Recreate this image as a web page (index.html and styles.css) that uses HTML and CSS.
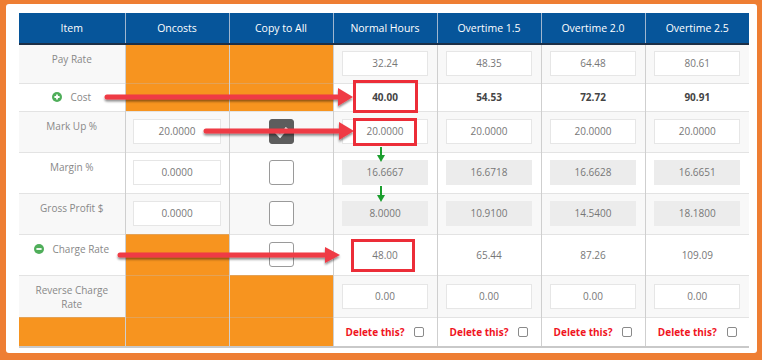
FILE: index.html
```html
<!DOCTYPE html>
<html>
<head>
<meta charset="utf-8">
<link rel="stylesheet" href="styles.css">
</head>
<body>
<div class="frame">
  <div class="sheet">
    <table class="grid">
      <colgroup>
        <col class="c-item"><col class="c-col"><col class="c-col"><col class="c-col"><col class="c-col"><col class="c-col"><col class="c-col">
      </colgroup>
      <thead>
        <tr>
          <th>Item</th><th>Oncosts</th><th>Copy to All</th><th>Normal Hours</th><th>Overtime 1.5</th><th>Overtime 2.0</th><th>Overtime 2.5</th>
        </tr>
      </thead>
      <tbody>
        <tr class="r-pay odd">
          <td class="label">Pay Rate</td>
          <td class="fill"></td><td class="fill"></td>
          <td><span class="field">32.24</span></td>
          <td><span class="field">48.35</span></td>
          <td><span class="field">64.48</span></td>
          <td><span class="field">80.61</span></td>
        </tr>
        <tr class="r-cost">
          <td class="label mid"><span class="toggle"><svg width="10" height="10" viewBox="0 0 10 10"><circle cx="5" cy="5" r="5" fill="#4fae5a"/><path d="M5 2.4v5.2M2.4 5h5.2" stroke="#fff" stroke-width="1.8"/></svg></span>Cost</td>
          <td class="fill"></td><td class="fill"></td>
          <td class="strong">40.00</td>
          <td class="strong">54.53</td>
          <td class="strong">72.72</td>
          <td class="strong">90.91</td>
        </tr>
        <tr class="r-std odd">
          <td class="label">Mark Up %</td>
          <td><span class="field wide">20.0000</span></td>
          <td><span class="box checked"><svg width="25" height="25" viewBox="0 0 25 25"><path d="M7 13l4 4 7-8" stroke="#fff" stroke-width="3" fill="none"/></svg></span></td>
          <td><span class="field">20.0000</span></td>
          <td><span class="field">20.0000</span></td>
          <td><span class="field">20.0000</span></td>
          <td><span class="field">20.0000</span></td>
        </tr>
        <tr class="r-std">
          <td class="label">Margin %</td>
          <td><span class="field wide">0.0000</span></td>
          <td><span class="box"></span></td>
          <td><span class="field ro">16.6667</span></td>
          <td><span class="field ro">16.6718</span></td>
          <td><span class="field ro">16.6628</span></td>
          <td><span class="field ro">16.6651</span></td>
        </tr>
        <tr class="r-std odd">
          <td class="label">Gross Profit $</td>
          <td><span class="field wide">0.0000</span></td>
          <td><span class="box"></span></td>
          <td><span class="field ro">8.0000</span></td>
          <td><span class="field ro">10.9100</span></td>
          <td><span class="field ro">14.5400</span></td>
          <td><span class="field ro">18.1800</span></td>
        </tr>
        <tr class="r-std">
          <td class="label"><span class="toggle"><svg width="10" height="10" viewBox="0 0 10 10"><circle cx="5" cy="5" r="5" fill="#4fae5a"/><path d="M2.4 5h5.2" stroke="#fff" stroke-width="1.8"/></svg></span>Charge Rate</td>
          <td class="fill"></td>
          <td><span class="box"></span></td>
          <td class="plain">48.00</td>
          <td class="plain">65.44</td>
          <td class="plain">87.26</td>
          <td class="plain">109.09</td>
        </tr>
        <tr class="r-rev odd">
          <td class="label">Reverse Charge Rate</td>
          <td class="fill"></td><td class="fill"></td>
          <td><span class="field">0.00</span></td>
          <td><span class="field">0.00</span></td>
          <td><span class="field">0.00</span></td>
          <td><span class="field">0.00</span></td>
        </tr>
        <tr class="r-del">
          <td class="fill"></td><td class="fill"></td><td class="fill"></td>
          <td><span class="del">Delete this?</span><span class="mini"></span></td>
          <td><span class="del">Delete this?</span><span class="mini"></span></td>
          <td><span class="del">Delete this?</span><span class="mini"></span></td>
          <td><span class="del">Delete this?</span><span class="mini"></span></td>
        </tr>
      </tbody>
    </table>
  </div>
  <svg class="notes" width="762" height="360" viewBox="0 0 762 360">
    <defs>
      <filter id="sh" x="-10%" y="-100%" width="120%" height="300%">
        <feDropShadow dx="0" dy="2" stdDeviation="1" flood-color="#000" flood-opacity="0.45"/>
      </filter>
    </defs>
    <g filter="url(#sh)" fill="#ef3b45" stroke="#ef3b45">
      <line x1="107" y1="97" x2="341" y2="97" stroke-width="5" stroke-linecap="round"/>
      <polygon points="338,88 353,97 338,106" stroke="none"/>
      <line x1="206" y1="131" x2="341" y2="131" stroke-width="5" stroke-linecap="round"/>
      <polygon points="339,122 354,131 339,140" stroke="none"/>
      <line x1="120" y1="255" x2="327" y2="255" stroke-width="5" stroke-linecap="round"/>
      <polygon points="325,247 340,255 325,263" stroke="none"/>
    </g>
    <g fill="none" stroke="#ec2d38" stroke-width="3">
      <rect x="354.5" y="81.5" width="62" height="30"/>
      <rect x="354.5" y="119.5" width="61" height="25"/>
      <rect x="352.5" y="240.5" width="61" height="30"/>
    </g>
    <g stroke="#1b9e2e" fill="#1b9e2e">
      <line x1="381" y1="147" x2="381" y2="156" stroke-width="2"/>
      <polygon points="377,155 385,155 381,162" stroke="none"/>
      <line x1="381" y1="186" x2="381" y2="196" stroke-width="2"/>
      <polygon points="377,195 385,195 381,202" stroke="none"/>
    </g>
  </svg>
</div>
</body>
</html>
```

FILE: styles.css
```css
html, body {
  margin: 0;
  padding: 0;
}
body {
  font-family: "Open Sans", "DejaVu Sans", sans-serif;
  font-size: 10px;
  color: #777;
}
.frame {
  position: relative;
  width: 762px;
  height: 360px;
  box-sizing: border-box;
  padding: 4px 5px 7px 6px;
  background: #ee7e33;
}
.sheet {
  height: 100%;
  box-sizing: border-box;
  background: #fff;
  border-radius: 3px;
  padding: 9px 8px 0 13px;
}
.grid {
  width: 730px;
  border-collapse: collapse;
  table-layout: fixed;
  border-bottom: 2px solid #c9c9c9;
}
.c-item { width: 106px; }
.c-col { width: 104px; }
.grid th {
  height: 30px;
  padding: 0;
  background: #06559a;
  color: #fff;
  font-weight: normal;
  font-size: 10.5px;
  border-left: 1px solid #9fb6cf;
  border-bottom: 2px solid #1c2f47;
  text-align: center;
  vertical-align: middle;
}
.grid th:first-child { border-left: none; }
.grid td {
  padding: 0;
  text-align: center;
  vertical-align: middle;
  border-left: 1px solid #cfcfcf;
  border-top: 1px solid #e3e3e3;
  background: #fff;
}
.grid td:first-child { border-left: none; }
.grid tr.odd td { background: #f8f8f8; }
.grid td.fill, .grid tr.odd td.fill { background: #f7941f; border-top-color: #e3a257; }
.r-pay { height: 39px; }
.r-cost { height: 28px; }
.r-std { height: 41px; }
.r-rev { height: 42px; }
.r-del { height: 30px; }
.grid td.label {
  vertical-align: top;
  padding: 7px 6px 0;
  line-height: 14px;
  color: #888;
}
.grid td.label.mid { vertical-align: middle; padding-top: 0; }
.toggle {
  display: inline-block;
  vertical-align: -1px;
  margin-right: 8px;
  line-height: 0;
}
.field {
  display: inline-block;
  box-sizing: border-box;
  width: 86px;
  height: 25px;
  line-height: 23px;
  border: 1px solid #e6e6e6;
  background: #fff;
  color: #777;
  vertical-align: middle;
}
.field.wide { width: 88px; }
.field.ro { background: #ececec; border-color: #ececec; }
.strong { font-weight: bold; color: #444; }
.plain { color: #777; }
.box {
  display: inline-block;
  box-sizing: border-box;
  width: 25px;
  height: 25px;
  border: 1px solid #9a9a9a;
  border-radius: 3px;
  background: #fff;
  vertical-align: middle;
  line-height: 0;
}
.box.checked { background: #5d5d5d; border-color: #5d5d5d; }
.box.checked svg { margin: -1px; }
.del {
  color: #f0141e;
  font-weight: bold;
  font-size: 10px;
}
.mini {
  display: inline-block;
  box-sizing: border-box;
  width: 10px;
  height: 10px;
  margin-left: 10px;
  border: 1px solid #8a8a8a;
  border-radius: 2px;
  vertical-align: -1px;
}
.notes {
  position: absolute;
  left: 0;
  top: 0;
  pointer-events: none;
}
```
